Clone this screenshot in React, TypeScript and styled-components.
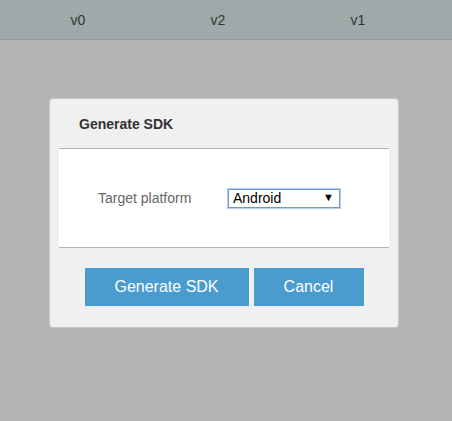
import styled, { createGlobalStyle } from "styled-components";

const GlobalStyle = createGlobalStyle`
  html, body {
    margin: 0;
    padding: 0;
    background: #b3b3b3;
    font-family: "Liberation Sans", Arial, sans-serif;
  }
`;

const Page = styled.div`
  width: 452px;
  height: 421px;
  background: #b3b3b3;
  overflow: hidden;
`;

const TopBar = styled.div`
  display: flex;
  height: 39px;
  padding-left: 8px;
  background: #9eaaaa;
  border-bottom: 1px solid #8f9a9a;
`;

const Tab = styled.div`
  width: 140px;
  display: flex;
  align-items: center;
  justify-content: center;
  font-size: 14px;
  color: #333;
`;

const Stage = styled.div`
  display: flex;
  padding: 58px 0 0 49px;
`;

const Dialog = styled.div`
  width: 348px;
  background: #f0f0f0;
  border: 1px solid #c8c8c8;
  border-radius: 4px;
  display: flex;
  flex-direction: column;
`;

const Header = styled.div`
  height: 49px;
  padding-left: 29px;
  display: flex;
  align-items: center;
  font-size: 14px;
  font-weight: bold;
  color: #333;
`;

const Body = styled.div`
  margin: 0 9px;
  height: 98px;
  background: #fff;
  border-top: 1px solid #b4b4b4;
  border-bottom: 1px solid #b4b4b4;
  display: flex;
  align-items: center;
  padding-left: 39px;
`;

const Label = styled.div`
  width: 130px;
  font-size: 14px;
  color: #666;
`;

const Select = styled.div`
  position: relative;
  width: 106px;
  height: 17px;
  border: 1px solid #6f97db;
  box-shadow: 0 0 0 1px #b9ccee;
  padding: 0 0 0 4px;
  display: flex;
  align-items: center;
  font-size: 14px;
  color: #000;
  background: #fff;
`;

const Arrow = styled.span`
  position: absolute;
  right: 5px;
  top: 1px;
  font-size: 11px;
`;

const Footer = styled.div`
  display: flex;
  justify-content: center;
  gap: 5px;
  padding: 20px 0 21px;
`;

const Button = styled.button<{ $w: number }>`
  width: ${(p) => p.$w}px;
  height: 38px;
  border: none;
  background: #4a9ccf;
  color: #fff;
  font-family: "Liberation Sans", Arial, sans-serif;
  font-size: 16px;
  padding: 0;
`;

export default function App() {
  return (
    <Page>
      <GlobalStyle />
      <TopBar>
        <Tab>v0</Tab>
        <Tab>v2</Tab>
        <Tab>v1</Tab>
      </TopBar>
      <Stage>
        <Dialog>
          <Header>Generate SDK</Header>
          <Body>
            <Label>Target platform</Label>
            <Select>
              Android
              <Arrow>▼</Arrow>
            </Select>
          </Body>
          <Footer>
            <Button $w={164}>Generate SDK</Button>
            <Button $w={110}>Cancel</Button>
          </Footer>
        </Dialog>
      </Stage>
    </Page>
  );
}
